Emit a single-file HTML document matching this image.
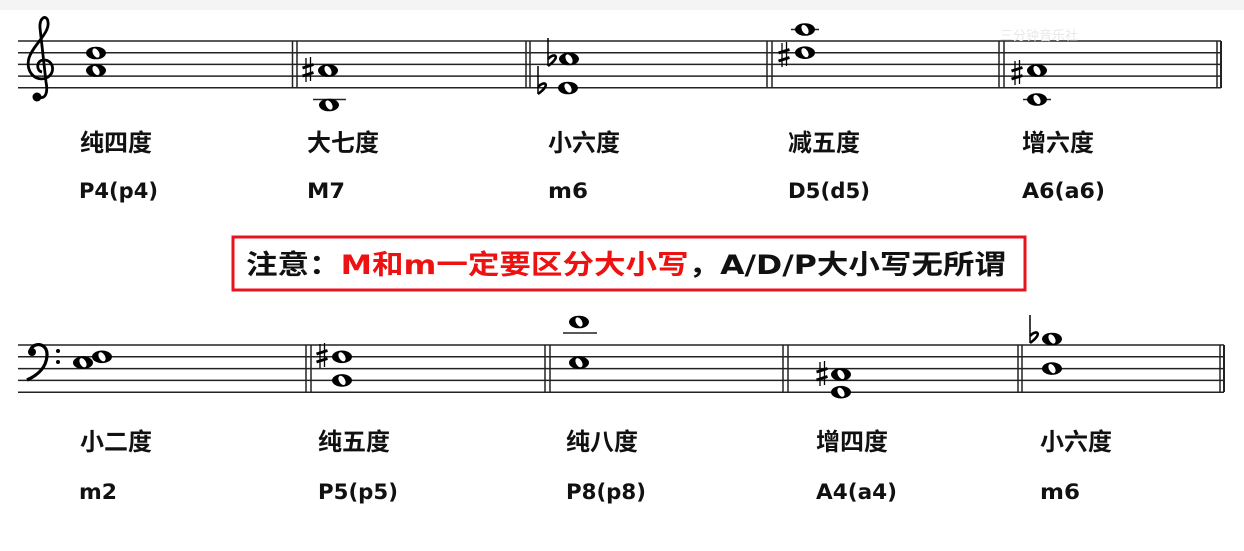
<!DOCTYPE html>
<html><head><meta charset="utf-8"><style>
html,body{margin:0;padding:0;background:#fff;width:1244px;height:551px;overflow:hidden}
svg{display:block}
.l{font-family:"DejaVu Sans","Noto Sans CJK SC",sans-serif;font-weight:bold;font-size:21px;fill:#111}
.c{font-family:"Noto Sans CJK SC",sans-serif;font-weight:bold;font-size:24px;fill:#111}
.b{font-family:"DejaVu Sans","Noto Sans CJK SC",sans-serif;font-weight:bold;font-size:27px}
</style></head><body>
<svg width="1244" height="551" viewBox="0 0 1244 551" xmlns="http://www.w3.org/2000/svg">
<defs>
<g id="n"><ellipse rx="10" ry="6.3" fill="#000"/><ellipse rx="3" ry="5" transform="rotate(-30)" fill="#fff"/></g>
<g id="s" stroke="#000" fill="none"><line x1="-2" y1="-12" x2="-2" y2="12" stroke-width="1.3"/><line x1="2.5" y1="-13" x2="2.5" y2="11" stroke-width="1.3"/><line x1="-5.5" y1="-2" x2="5.5" y2="-5.5" stroke-width="2.8"/><line x1="-5.5" y1="6" x2="5.5" y2="2.5" stroke-width="2.8"/></g>
<g id="f" fill="none" stroke="#000"><line x1="-4" y1="-22" x2="-4" y2="6" stroke-width="1.5"/><path d="M-4,-1 C2,-8 10,-4 -4,6" stroke-width="2.6"/></g>
</defs>
<rect x="0" y="0" width="1244" height="10" fill="#f4f4f4"/>
<g stroke="#222" stroke-width="1.5">
<line x1="18" y1="41" x2="1221" y2="41"/><line x1="18" y1="52.7" x2="1221" y2="52.7"/><line x1="18" y1="64.4" x2="1221" y2="64.4"/><line x1="18" y1="76.1" x2="1221" y2="76.1"/><line x1="18" y1="87.8" x2="1221" y2="87.8"/>
<line x1="292.5" y1="41" x2="292.5" y2="88"/><line x1="297" y1="41" x2="297" y2="88"/>
<line x1="526" y1="41" x2="526" y2="88"/><line x1="530" y1="41" x2="530" y2="88"/>
<line x1="767" y1="41" x2="767" y2="88"/><line x1="772" y1="41" x2="772" y2="88"/>
<line x1="999" y1="41" x2="999" y2="88"/><line x1="1004" y1="41" x2="1004" y2="88"/>
<line x1="1217" y1="41" x2="1217" y2="88"/><line x1="1221" y1="41" x2="1221" y2="88" stroke-width="2"/>
<line x1="313" y1="99.5" x2="346" y2="99.5"/>
<line x1="791" y1="29.5" x2="819" y2="29.5"/>
<line x1="1023" y1="99.5" x2="1051" y2="99.5"/>
</g>
<circle cx="37" cy="97" r="4.5" fill="#000"/>
<path d="M38,97 C46,100 48,92 46,82 L40,28 C39,17 47,14 48,22 C50,33 33,45 29,58 C25,72 36,82 46,78 C56,74 54,60 44,60 C36,60 36,71 42,72" fill="none" stroke="#000" stroke-width="2.8"/>
<use href="#n" x="96" y="53"/><use href="#n" x="96" y="70.5"/>
<use href="#s" x="308" y="70"/><use href="#n" x="328" y="70.5"/><use href="#n" x="329" y="105"/>
<use href="#f" x="552" y="60"/><use href="#n" x="569" y="59"/><use href="#f" x="542" y="88"/><use href="#n" x="568" y="88"/>
<use href="#n" x="805" y="29.5"/><use href="#s" x="784" y="55"/><use href="#n" x="805" y="52.7"/>
<use href="#s" x="1017" y="73"/><use href="#n" x="1037" y="70.5"/><use href="#n" x="1037" y="99.5"/>
<text x="1000" y="40" font-family="Liberation Sans,Noto Sans CJK SC,sans-serif" font-size="13" fill="#e8e8e8">三分钟音乐社</text>
<text class="c" x="80" y="151">纯四度</text><text class="c" x="307" y="151">大七度</text><text class="c" x="548" y="151">小六度</text><text class="c" x="788" y="151">减五度</text><text class="c" x="1022" y="151">增六度</text>
<text class="l" x="79" y="198" textLength="79" lengthAdjust="spacingAndGlyphs">P4(p4)</text><text class="l" x="307" y="198" textLength="38" lengthAdjust="spacingAndGlyphs">M7</text><text class="l" x="548" y="198" textLength="40" lengthAdjust="spacingAndGlyphs">m6</text><text class="l" x="788" y="198" textLength="82" lengthAdjust="spacingAndGlyphs">D5(d5)</text><text class="l" x="1022" y="198" textLength="83" lengthAdjust="spacingAndGlyphs">A6(a6)</text>
<rect x="233" y="237" width="792" height="53" fill="#fff" stroke="#e8141b" stroke-width="3"/>
<text class="b" x="246" y="274" textLength="760" lengthAdjust="spacingAndGlyphs"><tspan fill="#111">注意：</tspan><tspan fill="#ee1111">M和m一定要区分大小写</tspan><tspan fill="#111">，A/D/P大小写无所谓</tspan></text>
<g stroke="#222" stroke-width="1.5">
<line x1="18" y1="345" x2="1224" y2="345"/><line x1="18" y1="356.8" x2="1224" y2="356.8"/><line x1="18" y1="368.6" x2="1224" y2="368.6"/><line x1="18" y1="380.4" x2="1224" y2="380.4"/><line x1="18" y1="392.2" x2="1224" y2="392.2"/>
<line x1="306" y1="345" x2="306" y2="392"/><line x1="311" y1="345" x2="311" y2="392"/>
<line x1="545" y1="345" x2="545" y2="392"/><line x1="550" y1="345" x2="550" y2="392"/>
<line x1="783" y1="345" x2="783" y2="392"/><line x1="788" y1="345" x2="788" y2="392"/>
<line x1="1018" y1="345" x2="1018" y2="392"/><line x1="1022" y1="345" x2="1022" y2="392"/>
<line x1="1220" y1="345" x2="1220" y2="392"/><line x1="1224" y1="345" x2="1224" y2="392" stroke-width="2"/>
<line x1="563" y1="333" x2="597" y2="333"/>
</g>
<circle cx="32" cy="352" r="4" fill="#000"/>
<path d="M30,352 C31,342 48,341 47,356 C46,368 38,375 27,380" fill="none" stroke="#000" stroke-width="3.2"/>
<circle cx="58" cy="351" r="2" fill="#000"/><circle cx="58" cy="362" r="2" fill="#000"/>
<use href="#n" x="83" y="362.7"/><use href="#n" x="102" y="356.8"/>
<use href="#s" x="322" y="356"/><use href="#n" x="342" y="356.8"/><use href="#n" x="342" y="380.4"/>
<use href="#n" x="579" y="362.7"/><use href="#n" x="579" y="322"/>
<use href="#s" x="822" y="374"/><use href="#n" x="841" y="374.5"/><use href="#n" x="841" y="392.2"/>
<use href="#f" x="1034" y="337"/><use href="#n" x="1052" y="339"/><use href="#n" x="1052" y="368.6"/>
<text class="c" x="80" y="450">小二度</text><text class="c" x="318" y="450">纯五度</text><text class="c" x="566" y="450">纯八度</text><text class="c" x="816" y="450">增四度</text><text class="c" x="1040" y="450">小六度</text>
<text class="l" x="79" y="499" textLength="38" lengthAdjust="spacingAndGlyphs">m2</text><text class="l" x="318" y="499" textLength="80" lengthAdjust="spacingAndGlyphs">P5(p5)</text><text class="l" x="566" y="499" textLength="80" lengthAdjust="spacingAndGlyphs">P8(p8)</text><text class="l" x="816" y="499" textLength="81" lengthAdjust="spacingAndGlyphs">A4(a4)</text><text class="l" x="1040" y="499" textLength="40" lengthAdjust="spacingAndGlyphs">m6</text>
</svg>
</body></html>
